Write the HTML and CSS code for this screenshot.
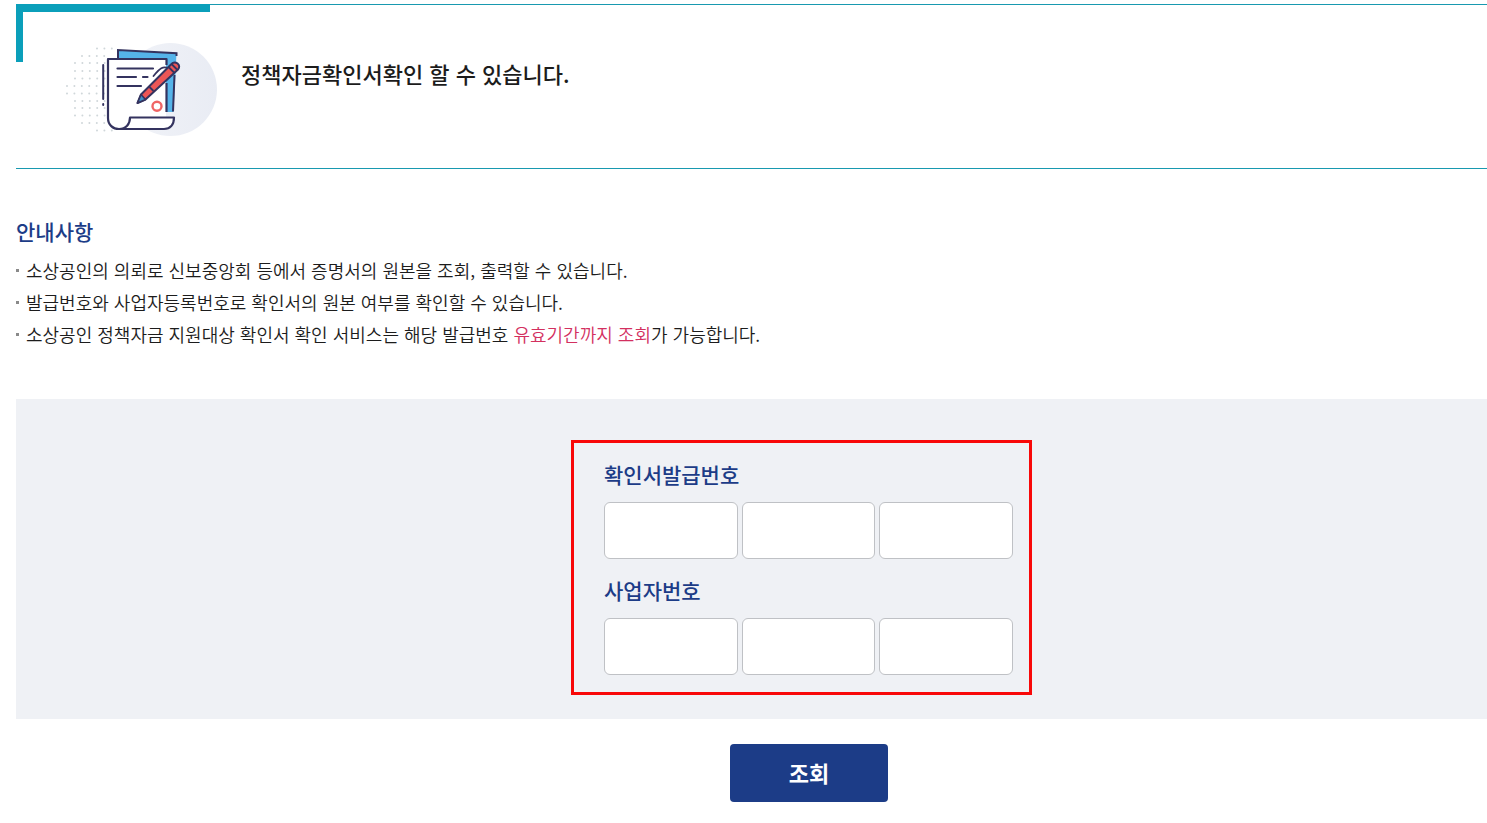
FILE: index.html
```html
<!DOCTYPE html>
<html lang="ko">
<head>
<meta charset="utf-8">
<meta name="viewport" content="width=device-width, initial-scale=1">
<title>정책자금확인서 확인</title>
<link rel="stylesheet" href="styles.css">
</head>
<body>
<main class="page">
  <header class="intro">
    <svg class="intro-icon" viewBox="60 36 160 104" aria-hidden="true">
      <defs>
        <linearGradient id="disc" x1="0" x2="1"><stop offset="0" stop-color="#f1f3f8"/><stop offset="1" stop-color="#e9ecf4"/></linearGradient>
      </defs>
      <g stroke="#d0d7da" stroke-width="2" stroke-linecap="round" stroke-dasharray="0 7.4">
        <path d="M97 48.500H113"/>
        <path d="M82 56H105"/>
        <path d="M75 63H105"/>
        <path d="M75 71H105"/>
        <path d="M75 78.500H105"/>
        <path d="M67 86H105"/>
        <path d="M67 93.500H105"/>
        <path d="M75 101H105"/>
        <path d="M75 108H105"/>
        <path d="M75 115.500H105"/>
        <path d="M82 123H105"/>
        <path d="M97 130.500H113"/>
      </g>
      <circle cx="170.500" cy="89.500" r="46.500" fill="url(#disc)"/>
      <path d="M118 50L176.500 53L173.500 112H166V60H118Z" fill="#55b3e9"/>
      <path d="M118 58V50L176.500 53.200V56M174.500 75L173 111.500" fill="none" stroke="#34335f" stroke-width="2"/>
      <path d="M108 59H166V117H173.500C173.500 125 169 129 164 129H118C111 128 108 123 108 117Z" fill="#fff"/>
      <path d="M166.500 65V59H108V118C108 125 113 129 119 129C126 129 130 124 130 117.500H174C174 125 170 129 164 129H119M166.500 83V112" fill="none" stroke="#34335f" stroke-width="2.200" stroke-linejoin="round"/>
      <path d="M103.200 65V99M103.200 104V105" stroke="#34335f" stroke-width="2" stroke-linecap="round"/>
      <path d="M117.500 68.500H153M117.500 77H136M143 77H147.500M117.500 86H141" stroke="#34335f" stroke-width="2.200" stroke-linecap="round"/>
      <circle cx="157" cy="106.200" r="4.500" fill="#fff" stroke="#f06464" stroke-width="2.400"/>
      <path d="M153.500 76C160 68 163 66 168 68" fill="none" stroke="#34335f" stroke-width="1.800" stroke-linecap="round"/>
      <path d="M137.500 103L141 94.500L171.500 64C175 60 182 65 178 69.500L145.500 99.500Z" fill="#ec5656" stroke="#34335f" stroke-width="2" stroke-linejoin="round"/>
      <path d="M137.500 103L141 94.500L145.500 99.500Z" fill="#3e8fc6" stroke="#34335f" stroke-width="1.600" stroke-linejoin="round"/>
      <path d="M149.500 87L153.500 91M168.500 67L174 72.500M171.500 64L177 69.500" stroke="#34335f" stroke-width="1.800"/>
    </svg>
    <h1 class="intro-title">정책자금확인서확인 할 수 있습니다.</h1>
  </header>

  <section class="notice">
    <h2 class="notice-title">안내사항</h2>
    <ul class="notice-list">
      <li>소상공인의 의뢰로 신보중앙회 등에서 증명서의 원본을 조회, 출력할 수 있습니다.</li>
      <li>발급번호와 사업자등록번호로 확인서의 원본 여부를 확인할 수 있습니다.</li>
      <li>소상공인 정책자금 지원대상 확인서 확인 서비스는 해당 발급번호 <span class="accent">유효기간까지 조회</span>가 가능합니다.</li>
    </ul>
  </section>

  <form>
    <div class="panel">
      <div class="fields">
        <div class="field">
          <label class="field-label" for="issue1">확인서발급번호</label>
          <div class="inputs">
            <input class="box" id="issue1" type="text">
            <input class="box" type="text" aria-label="확인서발급번호 2">
            <input class="box" type="text" aria-label="확인서발급번호 3">
          </div>
        </div>
        <div class="field">
          <label class="field-label" for="biz1">사업자번호</label>
          <div class="inputs">
            <input class="box" id="biz1" type="text">
            <input class="box" type="text" aria-label="사업자번호 2">
            <input class="box" type="text" aria-label="사업자번호 3">
          </div>
        </div>
      </div>
    </div>
    <div class="actions">
      <button class="submit" type="button">조회</button>
    </div>
  </form>
</main>
</body>
</html>
```

FILE: styles.css
```css
* {
  box-sizing: border-box;
}

body {
  margin: 0;
  background: #fff;
  color: #1c1c1c;
  font-family: "Noto Sans CJK KR", sans-serif;
  font-size: 18px;
  line-height: 32px;
}

h1,
h2,
ul {
  margin: 0;
  padding: 0;
  font-weight: 500;
}

.page {
  padding: 4px 0 20px 16px;
}

.intro {
  position: relative;
  display: flex;
  align-items: flex-start;
  gap: 21px;
  padding: 31px 16px 28px 44px;
  border-top: 1px solid #1899b0;
  border-bottom: 1px solid #1899b0;
}

/* Thick corner bracket over the top left of the frame */
.intro::before,
.intro::after {
  content: "";
  position: absolute;
  top: -1px;
  left: 0;
  background: #0b9fba;
}

.intro::before {
  width: 194px;
  height: 8px;
}

.intro::after {
  width: 7px;
  height: 58px;
}

.intro-icon {
  flex: none;
  width: 160px;
  height: 104px;
}

.intro-title {
  padding-top: 21px;
  font-size: 22px;
}

.notice {
  padding: 46px 0 49px;
}

.notice-title {
  margin-bottom: 7px;
  color: #1c3c87;
  font-size: 21px;
}

.notice-list {
  list-style: none;
  font-weight: 350;
}

.notice-list li {
  padding-left: 10px;
  background: linear-gradient(#8a8a8a, #8a8a8a) 0 15px / 3px 3px no-repeat;
}

.accent {
  color: #d3305f;
}

.panel {
  display: flex;
  justify-content: center;
  padding: 41px 0 24px 100px;
  background: #eff1f5;
}

.fields {
  display: flex;
  flex-direction: column;
  gap: 15px;
  width: 461px;
  padding: 15px 16px 17px 30px;
  border: 3px solid #f80808;
}

.field {
  display: flex;
  flex-direction: column;
  align-items: flex-start;
  gap: 12px;
}

.field-label {
  color: #1c3c87;
  font-size: 21px;
  font-weight: 500;
}

.inputs {
  display: flex;
  gap: 4px;
  width: 100%;
}

.box {
  flex: 1;
  width: 0;
  min-width: 0;
  height: 57px;
  padding: 0 12px;
  border: 1px solid #bfc1c5;
  border-radius: 6px;
  background: #fff;
  font: inherit;
}

.actions {
  display: flex;
  justify-content: center;
  padding: 25px 0 0 115px;
}

.submit {
  width: 158px;
  height: 58px;
  padding: 0 0 2px;
  border: 0;
  border-radius: 4px;
  background: #1c3c87;
  color: #fff;
  font-family: inherit;
  font-size: 22px;
  font-weight: 700;
}
```
